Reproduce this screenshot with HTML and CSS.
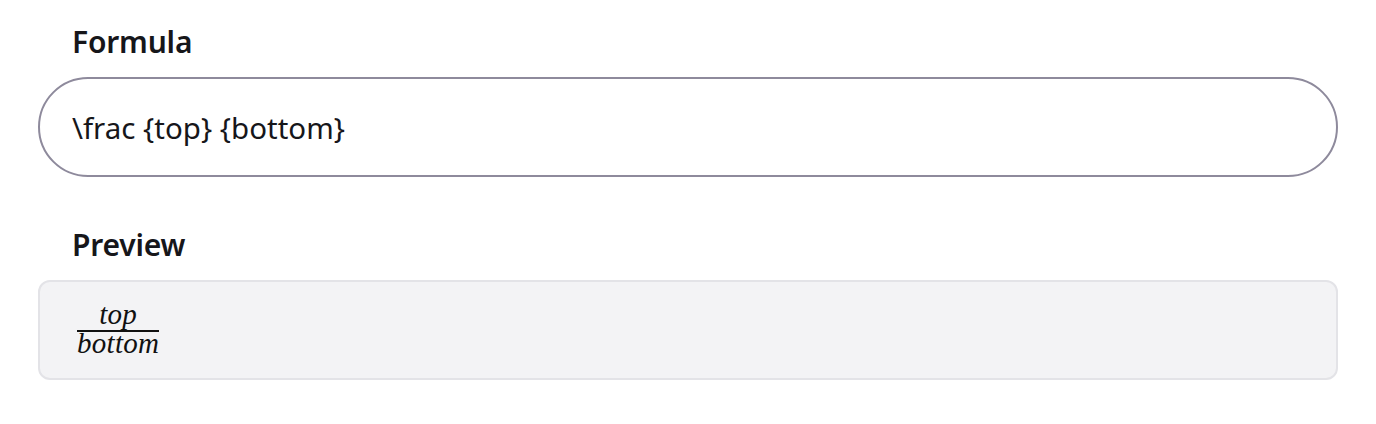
FILE: index.html
```html
<!DOCTYPE html>
<html lang="en">
<head>
<meta charset="utf-8">
<title>Formula</title>
<link rel="stylesheet" href="styles.css">
</head>
<body>
<main class="page">
  <section class="field">
    <label class="label" for="formula">Formula</label>
    <div class="input">\frac {top} {bottom}</div>
  </section>
  <section class="field field-preview">
    <div class="label">Preview</div>
    <div class="preview">
      <span class="frac">
        <span class="num">top</span>
        <span class="bar"></span>
        <span class="den">bottom</span>
      </span>
    </div>
  </section>
</main>
</body>
</html>
```

FILE: styles.css
```css
html, body {
  margin: 0;
  padding: 0;
  background: #ffffff;
}

body {
  font-family: "Noto Sans", "Open Sans", sans-serif;
  color: #16161a;
}

.page {
  display: flex;
  flex-direction: column;
  padding: 21px 38px 0 38px;
}

.field {
  display: flex;
  flex-direction: column;
}

.field-preview {
  margin-top: 47px;
}

.label {
  font-size: 30px;
  font-weight: 600;
  line-height: 42px;
  padding-left: 34px;
  margin-bottom: 14px;
  letter-spacing: -0.2px;
}

.input {
  box-sizing: border-box;
  height: 100px;
  border: 2px solid #8e8a9c;
  border-radius: 50px;
  display: flex;
  align-items: center;
  padding-left: 32px;
  font-size: 29.5px;
  color: #16161a;
}

.preview {
  box-sizing: border-box;
  height: 100px;
  border: 2px solid #e3e3e7;
  border-radius: 12px;
  background: #f3f3f5;
  display: flex;
  align-items: center;
  padding-left: 37px;
}

.frac {
  display: inline-flex;
  flex-direction: column;
  align-items: center;
  font-family: "Liberation Serif", serif;
  font-style: italic;
  font-size: 29px;
  color: #111;
  margin-top: -3px;
  letter-spacing: 0.3px;
}

.num {
  line-height: 22px;
  margin-bottom: 5px;
}

.bar {
  align-self: stretch;
  height: 1.5px;
  background: #111;
}

.den {
  line-height: 22px;
}
```
